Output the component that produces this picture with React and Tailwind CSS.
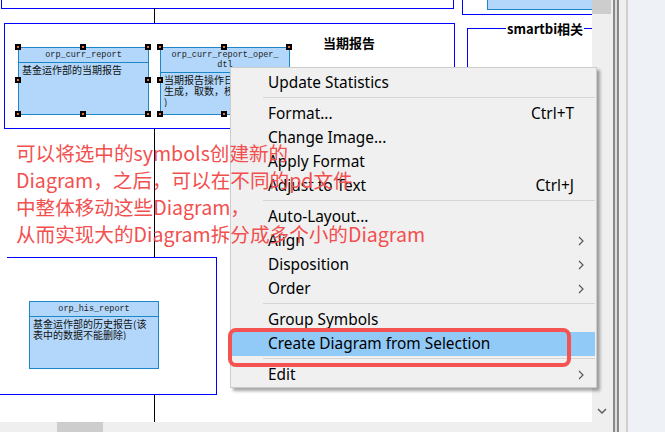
import React from "react";

const mono = { fontFamily: '"Liberation Mono", monospace' };

function Handle({ x, y }) {
  return (
    <div className="absolute w-[6px] h-[6px] bg-black flex items-center justify-center" style={{ left: x - 3, top: y - 3 }}>
      <div className="w-[2px] h-[2px] bg-[#e8742a]" />
    </div>
  );
}

function Table({ x, y, w, h, header, headerH, body }) {
  return (
    <div
      className="absolute border border-[#1c86c6] bg-[#b3d7fa] flex flex-col"
      style={{ left: x, top: y, width: w, height: h }}
    >
      <div
        className="border-b border-[#1c86c6] text-[8.5px] leading-[10px] text-[#222] flex flex-col items-center justify-center"
        style={{ ...mono, height: headerH }}
      >
        {header.map((l, i) => (
          <div key={i}>{l}</div>
        ))}
      </div>
      <div className="px-[3px] pt-[1px] text-[10px] leading-[11px] text-[#111] font-['Noto_Sans_CJK_SC',sans-serif] whitespace-nowrap overflow-hidden">
        {body.map((l, i) => (
          <div key={i}>{l}</div>
        ))}
      </div>
    </div>
  );
}

function Chevron() {
  return (
    <svg width="6" height="10" viewBox="0 0 6 10" className="block">
      <path d="M1 1 L5 5 L1 9" fill="none" stroke="#5a5a5a" strokeWidth="1.2" />
    </svg>
  );
}

function Item({ label, shortcut, sub, active }) {
  return (
    <div
      className={
        "h-[24px] flex items-center justify-between pl-[36px] " +
        (sub ? "pr-[11px] " : "pr-[21px] ") +
        (active ? "bg-[#91c9f7] mx-[1px]" : "mx-[1px]")
      }
    >
      <span>{label}</span>
      {shortcut && <span>{shortcut}</span>}
      {sub && <Chevron />}
    </div>
  );
}

function Sep() {
  return (
    <div className="h-[7px] pt-[2px] pl-[32px] pr-[1px]">
      <div className="h-[1px] bg-[#d5d5d5]" />
    </div>
  );
}

export default function App() {
  return (
    <div className="relative flex w-[665px] h-[432px] bg-white overflow-hidden">
      {/* left: canvas + scrollbars */}
      <div className="flex flex-col w-[613px]">
        <div className="flex h-[422px]">
          <div className="relative w-[592px] h-full bg-white overflow-hidden">
            {/* top rects */}
            <div className="absolute left-[1px] top-[-10px] w-[453px] h-[19px] border border-[#0000ff]" />
            <div className="absolute left-[462px] top-[-10px] w-[200px] h-[25px] border border-[#0000ff]">
              <div className="absolute left-[24px] top-0 w-[200px] h-[19px] border-l border-b border-[#1c86c6] bg-[#b3d7fa]" />
            </div>
            {/* vertical connector line */}
            <div className="absolute left-[154px] top-[8px] w-[1px] h-[15px] bg-black" />
            <div className="absolute left-[154px] top-[128px] w-[1px] h-[130px] bg-black" />
            <div className="absolute left-[154px] top-[394px] w-[1px] h-[30px] bg-black" />

            {/* main package rect */}
            <div className="absolute left-[4px] top-[23px] w-[451px] h-[106px] border border-[#0000ff]" />
            <div className="absolute left-[323px] top-[34px] text-[13px] leading-[18px] font-bold text-black font-['Noto_Sans_CJK_SC',sans-serif]">
              当期报告
            </div>

            {/* smartbi group */}
            <div className="absolute left-[467px] top-[28px] w-[160px] h-[300px] border-l border-t border-[#0000ff]" />
            <div className="absolute left-[506px] top-[20px] px-[1px] bg-white text-[13px] leading-[17px] font-bold text-black font-['Noto_Sans_CJK_SC',sans-serif]">
              smartbi相关
            </div>

            {/* tables */}
            <Table x={18} y={47} w={131} h={68} header={["orp_curr_report"]} headerH={15} body={["基金运作部的当期报告"]} />
            <Table
              x={160}
              y={47}
              w={130}
              h={68}
              header={["orp_curr_report_oper_", "dtl"]}
              headerH={25}
              body={["当期报告操作日志(自动", "生成，取数，校验等操作", ")"]}
            />
            <Handle x={18} y={47} />
            <Handle x={83} y={47} />
            <Handle x={148} y={47} />
            <Handle x={18} y={80} />
            <Handle x={148} y={80} />
            <Handle x={18} y={114} />
            <Handle x={83} y={114} />
            <Handle x={148} y={114} />
            <Handle x={160} y={47} />
            <Handle x={224} y={47} />
            <Handle x={289} y={47} />
            <Handle x={160} y={80} />
            <Handle x={160} y={114} />
            <Handle x={224} y={114} />

            {/* lower rect */}
            <div className="absolute left-[7px] top-[257px] w-[210px] h-[1px] bg-[#0000ff]" />
            <div className="absolute left-[216px] top-[257px] w-[1px] h-[138px] bg-[#0000ff]" />
            <div className="absolute left-0 top-[394px] w-[217px] h-[1px] bg-[#0000ff]" />
            <Table
              x={29}
              y={301}
              w={130}
              h={68}
              header={["orp_his_report"]}
              headerH={15}
              body={["基金运作部的历史报告(该", "表中的数据不能删除)"]}
            />
          </div>
          {/* vertical scrollbar */}
          <div className="w-[21px] h-full bg-[#efefef] flex flex-col justify-between">
            <div className="w-[19px] h-[14px] bg-[#cdcdcd]" />
            <div className="flex justify-center pb-[8px] pr-[2px]">
              <svg width="10" height="6" viewBox="0 0 10 6">
                <path d="M1 1 L5 5 L9 1" fill="none" stroke="#606060" strokeWidth="1.5" />
              </svg>
            </div>
          </div>
        </div>
        {/* horizontal scrollbar */}
        <div className="h-[10px] bg-[#efefef] flex">
          <div className="ml-[57px] w-[46px] h-full bg-[#cdcdcd]" />
        </div>
      </div>
      {/* splitter */}
      <div className="w-[2px] bg-[#8a8a8a]" />
      <div className="w-[2px] bg-[#dcdcdc]" />
      <div className="w-[2px] bg-[#888888]" />
      <div className="w-[7px] bg-[#f0f0f0]" />
      <div className="w-[2px] bg-[#d2cec9]" />
      <div className="flex-1 bg-[#eef2f7]" />

      {/* context menu */}
      <div className="absolute left-[230px] top-[67px] w-[367px] bg-[#f0f0f0] border border-[#cccccc] pt-[3px] shadow-[3px_3px_3px_rgba(0,0,0,0.35)] text-[15.4px] leading-[20px] text-black font-['Noto_Sans',sans-serif]">
        <Item label="Update Statistics" />
        <Sep />
        <Item label="Format..." shortcut="Ctrl+T" />
        <Item label="Change Image..." />
        <Item label="Apply Format" />
        <Item label="Adjust to Text" shortcut="Ctrl+J" />
        <Sep />
        <Item label="Auto-Layout..." />
        <Item label="Align" sub />
        <Item label="Disposition" sub />
        <Item label="Order" sub />
        <Sep />
        <Item label="Group Symbols" />
        <Item label="Create Diagram from Selection" active />
        <Sep />
        <Item label="Edit" sub />
      </div>

      {/* red annotation */}
      <div className="absolute left-[16px] top-[139px] text-[19.6px] leading-[27px] text-[#f24f4f] font-['Noto_Sans_CJK_SC',sans-serif] whitespace-nowrap">
        <div>可以将选中的symbols创建新的</div>
        <div>Diagram，之后，可以在不同的pd文件</div>
        <div>中整体移动这些Diagram，</div>
        <div>从而实现大的Diagram拆分成多个小的Diagram</div>
      </div>
      <div className="absolute left-[228px] top-[328px] w-[343px] h-[39px] border-4 border-[#f55252] rounded-[8px]" />
    </div>
  );
}
